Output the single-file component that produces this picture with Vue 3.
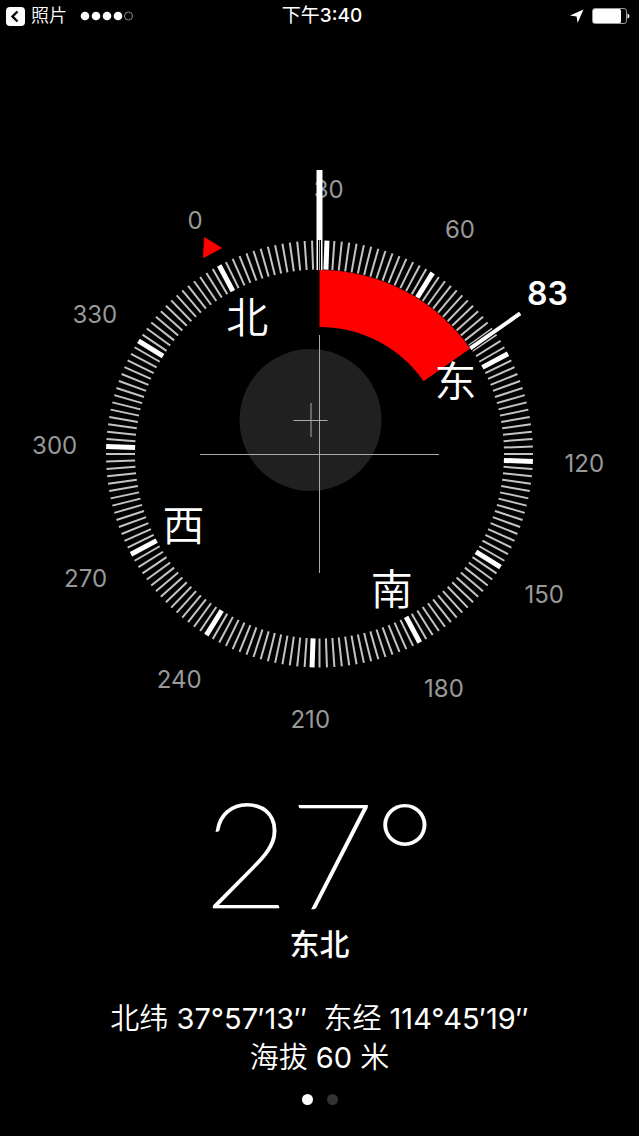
<script setup>
import { computed, ref } from 'vue'

const heading = ref(28)
const locked = ref(83)
const page = ref(0)

const ticks = Array.from({ length: 180 }, (_, i) => i * 2)

const polar = (bearing, radius) => {
  const rad = (bearing - heading.value) * Math.PI / 180
  return { x: Math.sin(rad) * radius, y: -Math.cos(rad) * radius }
}

const degrees = computed(() => Array.from({ length: 12 }, (_, i) => i * 30)
  .filter(value => value !== 90)
  .map(value => ({ value, ...polar(value, 265) })))

const directions = computed(() => ['北', '东', '南', '西']
  .map((name, i) => ({ name, ...polar(i * 90, 154) })))

const driftPath = computed(() => {
  const outer = polar(locked.value, 184)
  const inner = polar(locked.value, 127)
  return `M0 -184A184 184 0 0 1 ${outer.x} ${outer.y}L${inner.x} ${inner.y}A127 127 0 0 0 0 -127Z`
})
</script>

<template>
  <div class="screen">
    <header class="status">
      <div class="status-left">
        <button class="back" type="button">
          <svg class="back-icon" viewBox="0 0 19 19" aria-hidden="true">
            <rect width="19" height="19" rx="4" fill="#fff" />
            <path d="M11.5 4.5L6.5 9.5L11.5 14.5" fill="none" stroke="#000" stroke-width="2.4" />
          </svg>
          <span>照片</span>
        </button>
        <svg class="signal" viewBox="0 0 54 10" aria-hidden="true">
          <circle v-for="n in 4" :key="n" :cx="n * 11 - 6" cy="5" r="4.3" fill="#fff" />
          <circle cx="48.5" cy="5" r="4" fill="none" stroke="#aaa" stroke-width="0.8" />
        </svg>
      </div>
      <time class="clock">下午<span class="clock-digits">3:40</span></time>
      <div class="status-right">
        <svg class="location" viewBox="0 0 14 14" aria-hidden="true">
          <path d="M13.5 0.5L7.6 14L6.6 7.4L0 6.4Z" fill="#fff" />
        </svg>
        <svg class="battery" viewBox="0 0 38 16" aria-hidden="true">
          <rect x="0.5" y="0.5" width="34" height="15" rx="2.5" fill="none" stroke="#999" />
          <rect x="1" y="1" width="28" height="14" rx="1.5" fill="#fff" />
          <path d="M35.5 5.5Q37.500 6 37.500 8T35.500 10.500Z" fill="#fff" />
        </svg>
      </div>
    </header>

    <main class="content">
      <svg class="compass" viewBox="0 0 639 580" role="img" aria-label="指南针">
        <g transform="translate(319.5 290)">
          <circle cx="-9" cy="-34" r="71" fill="#202020" />
          <path d="M-26 -33.500H8M-8.500 -51V-17" stroke="#aaa" stroke-width="1" />
          <path d="M-119.500 0.500H119.500M0 -119V119" stroke="#aaa" stroke-width="1" />

          <path :d="driftPath" fill="#f00" />

          <g :transform="`rotate(${-heading})`">
            <line
              v-for="tick in ticks"
              :key="tick"
              y1="-213.500"
              y2="-184.500"
              :class="tick % 30 ? 'tick' : 'tick-major'"
              :transform="`rotate(${tick})`"
            />
            <path d="M0 -245L10 -228H-10Z" fill="#f00" stroke="#f00" stroke-linejoin="round" />
          </g>

          <text v-for="item in degrees" :key="item.value" class="degree" :x="item.x" :y="item.y + 9">{{ item.value }}</text>
          <text v-for="item in directions" :key="item.name" class="direction" :x="item.x" :y="item.y + 15">{{ item.name }}</text>

          <path d="M0 -284V-184" stroke="#fff" stroke-width="6" />
          <path d="M0 -214V-184" stroke="#000" stroke-width="3" />
          <path d="M0 -214V-184" stroke="#aaa" stroke-width="1" />
          <g :transform="`rotate(${locked - heading})`">
            <path d="M0 -220V-184" stroke="#000" stroke-width="6" />
            <path d="M0 -245V-184" stroke="#fff" stroke-width="4" />
          </g>
          <text class="locked" x="228" y="-149">{{ locked }}</text>
        </g>
      </svg>

      <h1 class="heading">27°</h1>
      <p class="bearing">东北</p>
      <p class="position">
        北纬 <span class="value">37°57′13″</span>&nbsp; 东经 <span class="value">114°45′19″</span>
      </p>
      <p class="position">海拔 <span class="value">60</span> 米</p>
    </main>

    <nav class="pager" aria-label="页面">
      <button
        v-for="n in 2"
        :key="n"
        type="button"
        class="dot"
        :class="{ active: page === n - 1 }"
        :aria-label="`第${n}页`"
        @click="page = n - 1"
      ></button>
    </nav>
  </div>
</template>

<style>
body{
  background: #000;
}
</style>

<style scoped>
.screen{
  display: flex;
  flex-direction: column;
  min-height: 100vh;
  background: #000;
  color: #fff;
  font-family: Inter, "Noto Sans CJK SC", sans-serif;
}

.status{
  display: grid;
  grid-template-columns: 1fr auto 1fr;
  align-items: center;
  height: 32px;
  padding: 0 9px 0 6px;
}

.status-left,
.status-right,
.back{
  display: flex;
  align-items: center;
}

.status-left{
  gap: 13px;
}

.back{
  gap: 6px;
  padding: 0;
  border: 0;
  background: none;
  color: #fff;
  font-family: inherit;
  font-size: 18px;
  font-weight: 350;
  line-height: 24px;
}

.back-icon{
  width: 19px;
  height: 19px;
}

.signal{
  width: 54px;
  height: 10px;
}

.clock{
  padding-left: 8px;
  font-size: 19px;
  font-weight: 400;
  line-height: 24px;
}

.clock-digits{
  font-weight: 500;
}

.status-right{
  justify-content: flex-end;
  gap: 8px;
}

.location{
  width: 14px;
  height: 14px;
}

.battery{
  width: 38px;
  height: 16px;
}

.content{
  display: flex;
  flex-direction: column;
  flex-grow: 1;
  align-items: center;
  padding-top: 132px;
}

.compass{
  display: block;
  width: 100%;
}

.tick{
  stroke: #c4c4c4;
  stroke-width: 2;
}

.tick-major{
  stroke: #fff;
  stroke-width: 5;
}

.degree{
  fill: #999;
  font-size: 24px;
  text-anchor: middle;
}

.direction{
  fill: #fff;
  font-size: 42px;
  font-weight: 350;
  text-anchor: middle;
}

.locked{
  fill: #fff;
  font-size: 32px;
  font-weight: 600;
  text-anchor: middle;
}

.heading{
  margin: 33px 0 0;
  font-family: Lato, sans-serif;
  font-size: 147px;
  font-weight: 100;
  line-height: 148px;
  -webkit-text-stroke: 2px #fff;
}

.bearing{
  margin: 0;
  font-size: 30px;
  font-weight: 500;
  line-height: 38px;
}

.position{
  margin: 0;
  font-size: 29px;
  font-weight: 350;
  line-height: 39px;
  text-align: center;
}

.value{
  font-weight: 400;
}

.bearing + .position{
  margin-top: 36px;
}

.pager{
  display: flex;
  justify-content: center;
  gap: 14px;
  padding: 12px 0 31px;
}

.dot{
  width: 11px;
  height: 11px;
  padding: 0;
  border: 0;
  border-radius: 50%;
  background: #333;
}

.dot.active{
  background: #fff;
}
</style>
